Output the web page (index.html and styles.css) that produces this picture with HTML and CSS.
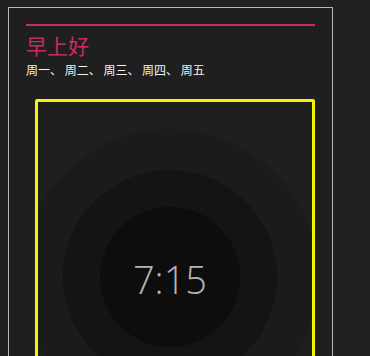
FILE: index.html
```html
<!DOCTYPE html>
<html lang="zh">
<head>
<meta charset="utf-8">
<link rel="stylesheet" href="styles.css">
</head>
<body>
<div class="card">
  <div class="rule"></div>
  <h1 class="title">早上好</h1>
  <p class="days">周一、 周二、 周三、 周四、 周五</p>
  <div class="frame">
    <div class="ring outer">
      <div class="ring middle">
        <div class="ring inner">
          <span class="time">7:15</span>
        </div>
      </div>
    </div>
  </div>
</div>
</body>
</html>
```
FILE: styles.css
```css
html, body {
  margin: 0;
  padding: 0;
  background: #202020;
  height: 100%;
  overflow: hidden;
}
body {
  font-family: "Noto Sans CJK SC", "Noto Sans", sans-serif;
}
.card {
  margin: 7px 0 0 8px;
  width: 306px;
  height: 400px;
  border: 1px solid #b8b8b8;
  padding: 16px 0 0 17px;
  background: #1f1f1f;
}
.rule {
  width: 289px;
  height: 2px;
  background: #cc2a62;
}
.title {
  margin: 4px 0 0 0;
  font-size: 21px;
  font-weight: 400;
  line-height: 30px;
  color: #cc2a62;
}
.days {
  margin: 2px 0 0 0;
  font-size: 12px;
  line-height: 16px;
  color: #f2f2f2;
}
.frame {
  margin: 21px 0 0 9px;
  width: 274px;
  height: 300px;
  border: 3px solid #f6f600;
  border-radius: 2px;
  display: flex;
  justify-content: center;
  align-items: flex-start;
  overflow: hidden;
  padding-top: 27px;
  box-sizing: content-box;
}
.ring {
  border-radius: 50%;
  display: flex;
  align-items: center;
  justify-content: center;
  flex: none;
}
.outer {
  width: 296px;
  height: 296px;
  background: #1b1b1b;
  margin-right: 10px;
}
.middle {
  width: 214px;
  height: 214px;
  background: #141414;
}
.inner {
  width: 140px;
  height: 140px;
  background: #0d0d0d;
}
.time {
  font-family: "Open Sans", "Segoe UI", sans-serif;
  font-weight: 300;
  font-size: 38px;
  color: #b4b4b4;
  line-height: 1;
  margin-top: 4px;
}
```
